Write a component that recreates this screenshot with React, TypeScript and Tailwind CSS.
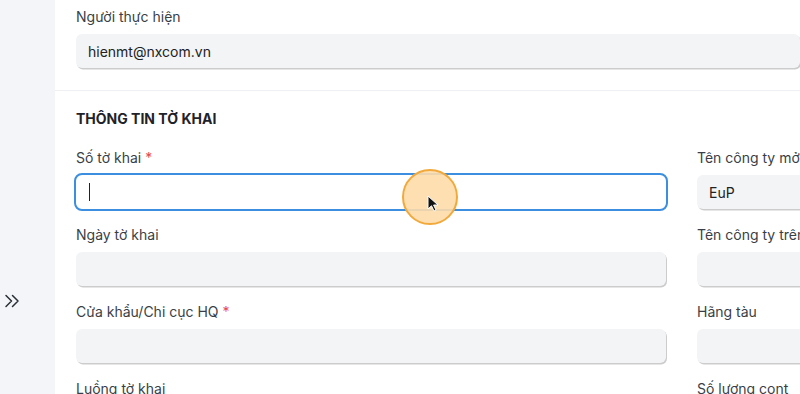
import React from "react";

interface FieldProps {
  label: string;
  value?: string;
  required?: boolean;
  focused?: boolean;
}

function Field({ label, value, required, focused }: FieldProps) {
  return (
    <div className="flex flex-col">
      <div className="h-5 text-[14px] leading-5 text-[#3a3f47] mb-[7px]">
        {label}
        {required && <span className="text-[#e5484d] ml-1">*</span>}
      </div>
      {focused ? (
        <div className="relative h-[34px] rounded-[6px] bg-white outline-2 outline-[#3b8ee0] outline-offset-0 flex items-center px-3">
          <div className="w-px h-[18px] bg-[#222] ml-[1px]" />
        </div>
      ) : (
        <div className="h-[34px] rounded-[6px] bg-[#f3f4f6] shadow-[1px_1.5px_0.5px_rgba(0,0,0,0.2)] flex items-center px-3 text-[14px] text-[#222]">
          {value}
        </div>
      )}
    </div>
  );
}

function App() {
  return (
    <div
      className="w-[800px] h-[394px] overflow-hidden flex bg-white"
      style={{ fontFamily: "Inter, 'Noto Sans', sans-serif" }}
    >
      <div className="w-[55px] shrink-0 bg-[#f3f5f8] flex flex-col pt-[294px] pl-[4px]">
        <svg width="16" height="14" viewBox="0 0 16 14" fill="none">
          <path
            d="M2 1.5 L7.5 7 L2 12.5 M8.5 1.5 L14 7 L8.5 12.5"
            stroke="#2a2f36"
            strokeWidth="1.5"
            strokeLinecap="round"
            strokeLinejoin="round"
          />
        </svg>
      </div>
      <div className="relative flex-1 min-w-0 flex flex-col">
        <div className="pl-[21px] pt-[7px] pb-[22px] border-b border-[#eef0f3]">
          <Field label="Người thực hiện" value="hienmt@nxcom.vn" />
        </div>
        <div className="pl-[21px] pt-[18px]">
          <div className="h-5 text-[14px] leading-5 font-bold text-[#1f2329] mb-[19px]">
            THÔNG TIN TỜ KHAI
          </div>
          <div className="grid grid-cols-[590px_590px] gap-x-[31px] gap-y-4">
            <Field label="Số tờ khai" required focused />
            <Field label="Tên công ty mở tờ khai" value="EuP" />
            <Field label="Ngày tờ khai" />
            <Field label="Tên công ty trên tờ khai" />
            <Field label="Cửa khẩu/Chi cục HQ" required />
            <Field label="Hãng tàu" />
            <Field label="Luồng tờ khai" />
            <Field label="Số lượng cont" />
          </div>
        </div>
        <div className="absolute left-[347px] top-[169px] w-[56px] h-[56px] rounded-full bg-[#fddcaa]/90 border-2 border-[#f2a93b]" />
        <svg
          className="absolute left-[372px] top-[195px]"
          width="14"
          height="18"
          viewBox="0 0 14 18"
        >
          <path
            d="M1 1 L1 14 L4.5 10.8 L7 16 L9 15 L6.6 10 L11 10 Z"
            fill="#111"
            stroke="#fff"
            strokeWidth="1"
          />
        </svg>
      </div>
    </div>
  );
}

export default App;
